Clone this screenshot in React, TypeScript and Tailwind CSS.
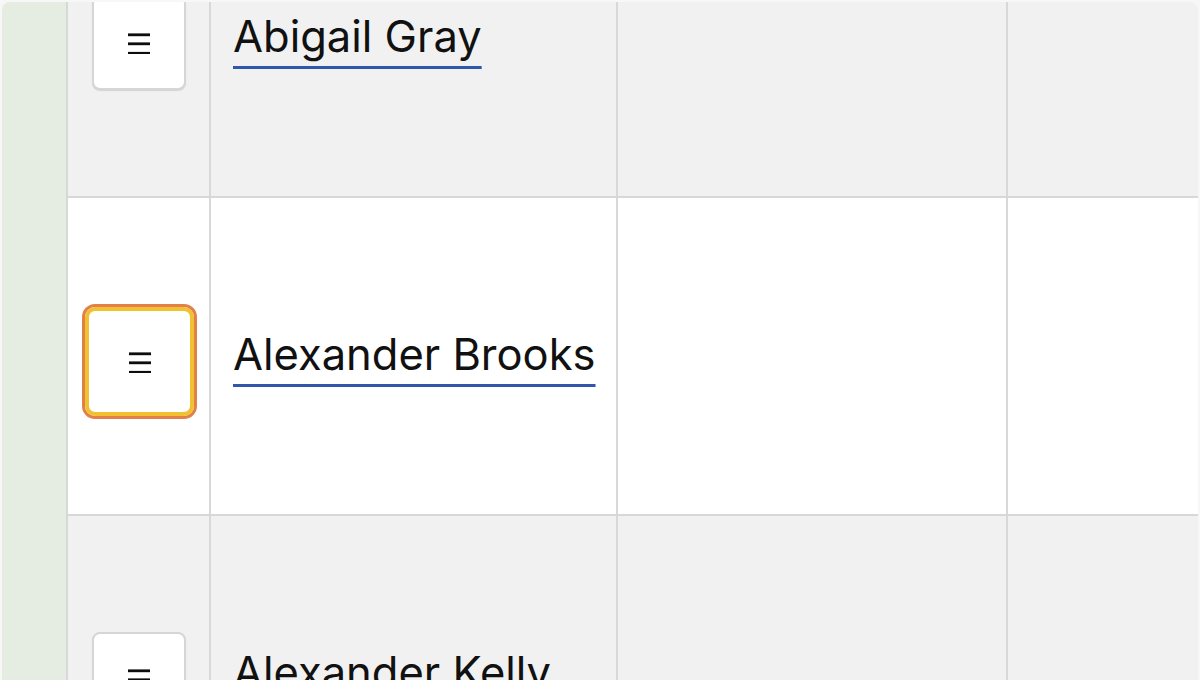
import React from "react";

function MenuIcon() {
  return (
    <svg width="22" height="22" viewBox="0 0 22 22" className="block">
      <rect x="0" y="1.4" width="22" height="2.8" fill="#0d0d0d" />
      <rect x="0" y="10.4" width="22" height="2.8" fill="#0d0d0d" />
      <rect x="0" y="19.9" width="22" height="2.8" fill="#0d0d0d" />
    </svg>
  );
}

type Row = { name: string; bg: string; focused?: boolean };

const rows: Row[] = [
  { name: "Abigail Gray", bg: "bg-[#f1f1f1]" },
  { name: "Alexander Brooks", bg: "bg-white", focused: true },
  { name: "Alexander Kelly", bg: "bg-[#f1f1f1]" },
];

function RowView({ row }: { row: Row }) {
  return (
    <div className={`flex h-[318px] shrink-0 border-b-2 border-[#d8d8d8] ${row.bg}`}>
      <div className="w-[143px] shrink-0 border-l-2 border-[#d8d8d8]">
        {row.focused ? (
          <div className="ml-[14px] mt-[106px] h-[115px] w-[115px] rounded-[13px] border-[3px] border-[#e3804a]">
            <div className="flex h-full w-full items-center justify-center rounded-[10px] border-[4px] border-[#f0c232] bg-white">
              <MenuIcon />
            </div>
          </div>
        ) : (
          <div className="ml-[24px] mt-[116px] flex h-[94px] w-[94px] items-center justify-center rounded-[8px] border-2 border-[#d6d6d6] bg-white shadow-[0_1px_1px_rgba(0,0,0,0.12)]">
            <MenuIcon />
          </div>
        )}
      </div>
      <div className="w-[407px] shrink-0 border-l-2 border-[#d8d8d8] pl-[22px] pt-[135px]">
        <span className="font-['Inter',sans-serif] text-[43.5px] leading-[42px] text-[#111111] underline decoration-[#3356ad] decoration-[3px] underline-offset-[14px]">
          {row.name}
        </span>
      </div>
      <div className="w-[390px] shrink-0 border-l-2 border-[#d8d8d8]" />
      <div className="flex-1 border-l-2 border-[#d8d8d8]" />
    </div>
  );
}

export default function App() {
  return (
    <div className="h-[680px] w-[1200px] overflow-hidden bg-[#f7f7f8] px-[2px] pt-[2px]">
      <div className="flex h-full overflow-hidden rounded-t-[8px]">
        <div className="w-[64px] shrink-0 bg-[#e5ede2]" />
        <div className="flex flex-1 flex-col -mt-[122px]">
          {rows.map((r) => (
            <RowView key={r.name} row={r} />
          ))}
        </div>
      </div>
    </div>
  );
}
